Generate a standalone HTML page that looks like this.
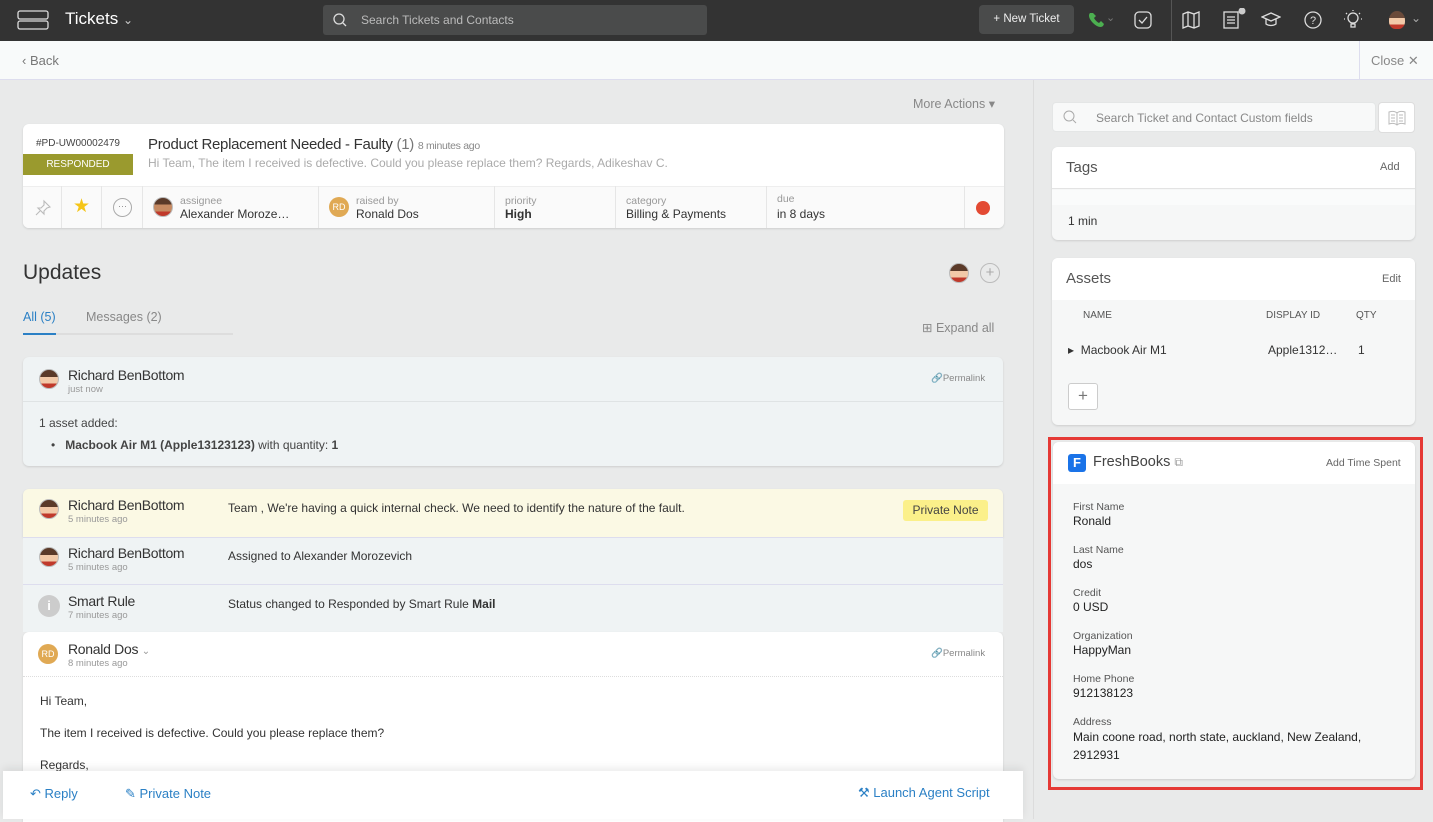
<!DOCTYPE html>
<html><head><meta charset="utf-8"><style>
*{box-sizing:border-box;margin:0;padding:0}
body{width:1433px;height:819px;overflow:hidden;background:#e9eaea;font-family:"Liberation Sans",sans-serif;color:#333;position:relative;font-size:12px}
.a{position:absolute}
.top{left:0;top:0;width:1433px;height:41px;background:#333}
.sub{left:0;top:41px;width:1433px;height:39px;background:#f8fafa;border-bottom:1px solid #dde}
.card{background:#fff;border-radius:6px;box-shadow:0 1px 2px rgba(0,0,0,.12)}
.ic{stroke:#ddd;fill:none;stroke-width:1.3}
.lbl{font-size:10.5px;color:#999}
.val{font-size:12px;color:#333}
.av{width:20px;height:20px;border-radius:50%;background:#ddd;border:1px solid #bbb}
.rd{width:20px;height:20px;border-radius:50%;background:#e0a954;color:#fff;font-size:9px;text-align:center;line-height:20px}
.nm{font-size:14px;color:#333;letter-spacing:-.3px}
.tm{font-size:9.5px;color:#999}
.blue{color:#2b80c5}
</style></head><body>
<div class="a top">
 <svg class="a" style="left:17px;top:10px" width="32" height="20"><rect x="1" y="1" width="30" height="8" rx="2" class="ic"/><rect x="1" y="11" width="30" height="8" rx="2" class="ic"/></svg>
 <div class="a" style="left:65px;top:9px;color:#fff;font-size:17px">Tickets <span style="font-size:12px;color:#ccc">&#8964;</span></div>
 <div class="a" style="left:323px;top:5px;width:384px;height:30px;background:#4a4b4b;border-radius:3px"><svg class="a" style="left:10px;top:8px" width="14" height="14"><circle cx="6" cy="6" r="5" class="ic"/><path d="M10 10l3 3" class="ic"/></svg><span class="a" style="left:38px;top:8px;color:#bbb;font-size:12px">Search Tickets and Contacts</span></div>
 <div class="a" style="left:979px;top:5px;width:95px;height:29px;background:#4a4b4b;border-radius:4px;color:#eee;font-size:11.5px;line-height:29px;text-align:center">+ New Ticket</div>
 <svg class="a" style="left:1087px;top:11px" width="20" height="18"><path d="M3 2c-2 2-1 6 3 10s8 5 10 3l1-2-3-3-2 2c-2-1-4-3-5-5l2-2-3-3z" fill="#4caf50"/></svg>
 <div class="a" style="left:1106px;top:11px;color:#777;font-size:11px">&#8964;</div>
 <svg class="a" style="left:1134px;top:11px" width="18" height="18"><rect x="1" y="1" width="16" height="16" rx="4" class="ic"/><path d="M5 9l3 3 5-6" class="ic"/></svg>
 <div class="a" style="left:1171px;top:0;width:1px;height:41px;background:#555"></div>
 <svg class="a" style="left:1182px;top:11px" width="18" height="18"><path d="M1 3l5-2 6 2 5-2v14l-5 2-6-2-5 2z M6 1v14 M12 3v14" class="ic"/></svg>
 <svg class="a" style="left:1221px;top:8px" width="26" height="22"><rect x="3" y="4" width="14" height="16" class="ic"/><path d="M6 9h8M6 12h8M6 15h8" class="ic"/><circle cx="21" cy="3" r="3.5" fill="#ccc"/></svg>
 <svg class="a" style="left:1261px;top:11px" width="20" height="16"><path d="M1 6l9-4 9 4-9 4z M5 8v5c3 2 7 2 10 0V8" class="ic"/></svg>
 <svg class="a" style="left:1304px;top:11px" width="18" height="18"><circle cx="9" cy="9" r="8" class="ic"/><text x="9" y="13" font-size="11" fill="#ddd" text-anchor="middle">?</text></svg>
 <svg class="a" style="left:1343px;top:9px" width="20" height="20"><circle cx="10" cy="9" r="5" class="ic"/><path d="M8 15h4v3h-4zM10 1v1M3 4l1 1M17 4l-1 1M1 10h1M18 10h1" class="ic"/></svg>
 <div class="a" style="left:1389px;top:11px;width:16px;height:18px;border-radius:50% 50% 40% 40%;background:linear-gradient(#6a4a3a 40%,#f2c9a8 40%,#f2c9a8 75%,#c0392b 75%)"></div>
 <div class="a" style="left:1411px;top:11px;color:#aaa;font-size:12px">&#8964;</div>
</div>
<div class="a sub">
 <div class="a" style="left:22px;top:12px;color:#777;font-size:13px">&lsaquo; Back</div>
 <div class="a" style="left:1359px;top:0;width:1px;height:39px;background:#dde"></div>
 <div class="a" style="left:1371px;top:12px;color:#888;font-size:13px">Close &#10005;</div>
</div>
<div class="a" style="left:1033px;top:80px;width:1px;height:739px;background:#dcdcdc"></div>
<div class="a" style="left:913px;top:96px;color:#888;font-size:12.5px">More Actions &#9662;</div>
<div class="a card" style="left:23px;top:124px;width:981px;height:104px">
 <div class="a" style="left:13px;top:14px;font-size:10px;color:#444">#PD-UW00002479</div>
 <div class="a" style="left:0;top:30px;width:110px;height:21px;background:#9a9a2e;color:#fff;font-size:10px;text-align:center;line-height:21px">RESPONDED</div>
 <div class="a" style="left:125px;top:12px;font-size:15px;color:#333;letter-spacing:-.3px">Product Replacement Needed - Faulty <span style="color:#777">(1)</span> <span style="font-size:10.5px;color:#888">8 minutes ago</span></div>
 <div class="a" style="left:125px;top:32px;font-size:12px;color:#aaa">Hi Team, The item I received is defective. Could you please replace them? Regards, Adikeshav C.</div>
 <div class="a" style="left:0;top:62px;width:981px;height:42px;background:#fafafa;border-top:1px solid #eee;border-radius:0 0 6px 6px"></div>
 <svg class="a" style="left:11px;top:75px" width="18" height="18"><path d="M10 2l6 6-3 1-3 3 0 3-6-6 3 0 3-3zM6 12l-4 4" stroke="#bbb" fill="none" stroke-width="1.1"/></svg>
 <div class="a" style="left:50px;top:71px;color:#f5c518;font-size:19px">&#9733;</div>
 <div class="a" style="left:90px;top:74px;width:19px;height:19px;border-radius:50%;border:1px solid #aaa;font-size:9px;color:#888;text-align:center;line-height:15px">···</div>
 <div class="a" style="left:119px;top:62px;width:1px;height:42px;background:#e6e6e6"></div>
 <div class="a" style="left:38px;top:62px;width:1px;height:42px;background:#e6e6e6"></div>
 <div class="a" style="left:78px;top:62px;width:1px;height:42px;background:#e6e6e6"></div>
 <div class="a av" style="left:130px;top:73px;background:linear-gradient(#5b3a29 35%,#c68a62 35%,#c68a62 75%,#c0392b 75%)"></div>
 <div class="a lbl" style="left:157px;top:71px">assignee</div><div class="a val" style="left:157px;top:83px">Alexander Moroze…</div>
 <div class="a" style="left:295px;top:62px;width:1px;height:42px;background:#e6e6e6"></div>
 <div class="a rd" style="left:306px;top:73px">RD</div>
 <div class="a lbl" style="left:333px;top:71px">raised by</div><div class="a val" style="left:333px;top:83px">Ronald Dos</div>
 <div class="a" style="left:471px;top:62px;width:1px;height:42px;background:#e6e6e6"></div>
 <div class="a lbl" style="left:482px;top:71px">priority</div><div class="a val" style="left:482px;top:83px;font-weight:bold">High</div>
 <div class="a" style="left:592px;top:62px;width:1px;height:42px;background:#e6e6e6"></div>
 <div class="a lbl" style="left:603px;top:71px">category</div><div class="a val" style="left:603px;top:83px">Billing &amp; Payments</div>
 <div class="a" style="left:743px;top:62px;width:1px;height:42px;background:#e6e6e6"></div>
 <div class="a lbl" style="left:754px;top:69px">due</div><div class="a val" style="left:754px;top:83px">in 8 days</div>
 <div class="a" style="left:941px;top:62px;width:1px;height:42px;background:#e6e6e6"></div>
 <div class="a" style="left:953px;top:77px;width:14px;height:14px;border-radius:50%;background:#e34a33"></div>
</div>
<div class="a" style="left:23px;top:261px;font-size:21px;color:#333">Updates</div>
<div class="a av" style="left:949px;top:263px;background:linear-gradient(#5b3a29 40%,#f2c9a8 40%,#f2c9a8 75%,#c0392b 75%)"></div>
<div class="a" style="left:980px;top:263px;width:20px;height:20px;border-radius:50%;border:1px solid #bbb;color:#aaa;text-align:center;line-height:18px;font-size:15px">+</div>
<div class="a blue" style="left:23px;top:310px;font-size:12.5px">All (5)</div>
<div class="a" style="left:86px;top:310px;font-size:12.5px;color:#888">Messages (2)</div>
<div class="a" style="left:23px;top:333px;width:210px;height:2px;background:#ddd"></div>
<div class="a" style="left:23px;top:333px;width:33px;height:2px;background:#2b80c5"></div>
<div class="a" style="left:922px;top:320px;font-size:12.5px;color:#888">&#8862; Expand all</div>
<div class="a card" style="left:23px;top:357px;width:980px;height:109px;background:#eff3f4">
 <div class="a av" style="left:16px;top:12px;background:linear-gradient(#5b3a29 40%,#f2c9a8 40%,#f2c9a8 75%,#c0392b 75%)"></div>
 <div class="a nm" style="left:45px;top:10px">Richard BenBottom</div>
 <div class="a tm" style="left:45px;top:27px">just now</div>
 <div class="a" style="left:908px;top:16px;font-size:9.5px;color:#888">&#128279;Permalink</div>
 <div class="a" style="left:0;top:44px;width:980px;height:1px;background:#dfe3e4"></div>
 <div class="a" style="left:16px;top:59px;font-size:12px;color:#444">1 asset added:</div>
 <div class="a" style="left:28px;top:81px;font-size:12px;color:#444">•&nbsp;&nbsp; <b>Macbook Air M1 (Apple13123123)</b> with quantity: <b>1</b></div>
</div>
<div class="a card" style="left:23px;top:489px;width:980px;height:48px;background:#fbf9e4;border-radius:6px 6px 0 0"></div>
<div class="a av" style="left:39px;top:499px;background:linear-gradient(#5b3a29 40%,#f2c9a8 40%,#f2c9a8 75%,#c0392b 75%)"></div>
<div class="a nm" style="left:68px;top:497px">Richard BenBottom</div><div class="a tm" style="left:68px;top:514px">5 minutes ago</div>
<div class="a" style="left:228px;top:501px;font-size:12px;color:#333">Team , We're having a quick internal check. We need to identify the nature of the fault.</div>
<div class="a" style="left:903px;top:500px;width:85px;height:21px;background:#fbf08a;border-radius:3px;font-size:12px;text-align:center;line-height:21px;color:#444">Private Note</div>
<div class="a" style="left:23px;top:537px;width:980px;height:47px;background:#eff3f4;border-top:1px solid #dde"></div>
<div class="a av" style="left:39px;top:547px;background:linear-gradient(#5b3a29 40%,#f2c9a8 40%,#f2c9a8 75%,#c0392b 75%)"></div>
<div class="a nm" style="left:68px;top:545px">Richard BenBottom</div><div class="a tm" style="left:68px;top:562px">5 minutes ago</div>
<div class="a" style="left:228px;top:549px;font-size:12px">Assigned to Alexander Morozevich</div>
<div class="a" style="left:23px;top:584px;width:980px;height:48px;background:#eff3f4;border-top:1px solid #dde"></div>
<div class="a" style="left:38px;top:595px;width:22px;height:22px;border-radius:50%;background:#ccc;color:#fff;font-weight:bold;text-align:center;line-height:22px;font-size:13px">i</div>
<div class="a nm" style="left:68px;top:593px">Smart Rule</div><div class="a tm" style="left:68px;top:610px">7 minutes ago</div>
<div class="a" style="left:228px;top:597px;font-size:12px">Status changed to Responded by Smart Rule <b>Mail</b></div>
<div class="a" style="left:23px;top:632px;width:980px;height:190px;background:#fff;border-radius:6px 6px 0 0;box-shadow:0 1px 2px rgba(0,0,0,.12)">
 <div class="a rd" style="left:15px;top:12px">RD</div>
 <div class="a nm" style="left:45px;top:9px">Ronald Dos <span style="font-size:10px;color:#999">&#8964;</span></div><div class="a tm" style="left:45px;top:26px">8 minutes ago</div>
 <div class="a" style="left:908px;top:16px;font-size:9.5px;color:#888">&#128279;Permalink</div>
 <div class="a" style="left:0;top:44px;width:980px;border-top:1px dotted #ddd"></div>
 <div class="a" style="left:17px;top:62px;font-size:12px">Hi Team,</div>
 <div class="a" style="left:17px;top:94px;font-size:12px">The item I received is defective. Could you please replace them?</div>
 <div class="a" style="left:17px;top:126px;font-size:12px">Regards,</div>
</div>
<div class="a" style="left:3px;top:771px;width:1020px;height:48px;background:#fff;box-shadow:0 -3px 8px rgba(0,0,0,.08)">
 <div class="a blue" style="left:27px;top:15px;font-size:13px">&#8630; Reply</div>
 <div class="a blue" style="left:122px;top:15px;font-size:13px">&#9998; Private Note</div>
 <div class="a blue" style="left:855px;top:14px;font-size:13px">&#9874; Launch Agent Script</div>
</div>
<div class="a" style="left:1052px;top:102px;width:324px;height:30px;background:#f8f9f9;border-radius:4px;border:1px solid #e4e6e6"><svg class="a" style="left:10px;top:7px" width="14" height="14"><circle cx="6" cy="6" r="5" stroke="#aaa" fill="none"/><path d="M10 10l3 3" stroke="#aaa"/></svg><span class="a" style="left:43px;top:8px;color:#888;font-size:12px">Search Ticket and Contact Custom fields</span></div>
<div class="a" style="left:1378px;top:102px;width:37px;height:31px;background:#fff;border-radius:4px;border:1px solid #ddd"><svg class="a" style="left:9px;top:7px" width="18" height="16"><path d="M1 2c3-1 6-1 8 1 2-2 5-2 8-1v12c-3-1-6-1-8 1-2-2-5-2-8-1zM9 3v12M3 5h4M3 8h4M3 11h4M11 5h4M11 8h4M11 11h4" stroke="#bbb" fill="none"/></svg></div>
<div class="a card" style="left:1052px;top:147px;width:363px;height:93px;background:#f6f7f7">
 <div class="a" style="left:0;top:0;width:363px;height:42px;background:#fff;border-bottom:1px solid #e3e3e3;border-radius:6px 6px 0 0"></div>
 <div class="a" style="left:0;top:43px;width:363px;height:15px;background:#fafbfb"></div>
 <div class="a" style="left:14px;top:12px;font-size:15px;color:#555">Tags</div>
 <div class="a" style="left:328px;top:14px;font-size:11px;color:#666">Add</div>
 <div class="a" style="left:16px;top:67px;font-size:12px">1 min</div>
</div>
<div class="a card" style="left:1052px;top:258px;width:363px;height:167px;background:#f6f7f7">
 <div class="a" style="left:0;top:0;width:363px;height:42px;background:#fff;border-radius:6px 6px 0 0"></div>
 <div class="a" style="left:14px;top:12px;font-size:15px;color:#555">Assets</div>
 <div class="a" style="left:330px;top:15px;font-size:11px;color:#666">Edit</div>
 <div class="a" style="left:31px;top:52px;font-size:10px;color:#555">NAME</div>
 <div class="a" style="left:214px;top:52px;font-size:10px;color:#555">DISPLAY ID</div>
 <div class="a" style="left:304px;top:52px;font-size:10px;color:#555">QTY</div>
 <div class="a" style="left:16px;top:85px;font-size:12px">&#9656;&nbsp; Macbook Air M1</div>
 <div class="a" style="left:216px;top:85px;font-size:12px">Apple1312…</div>
 <div class="a" style="left:306px;top:85px;font-size:12px">1</div>
 <div class="a" style="left:16px;top:125px;width:30px;height:27px;background:#fff;border:1px solid #ccc;border-radius:3px;text-align:center;line-height:24px;color:#777;font-size:17px">+</div>
</div>
<div class="a" style="left:1048px;top:437px;width:375px;height:353px;border:3px solid #e53935"></div>
<div class="a card" style="left:1053px;top:442px;width:362px;height:337px;background:#f6f7f7">
 <div class="a" style="left:0;top:0;width:362px;height:42px;background:#fff;border-radius:6px 6px 0 0"></div>
 <div class="a" style="left:15px;top:12px;width:18px;height:18px;background:#1a73e8;border-radius:3px;color:#fff;font-weight:bold;text-align:center;line-height:18px;font-size:13px">F</div>
 <div class="a" style="left:40px;top:12px;font-size:14.5px;color:#444">FreshBooks <span style="color:#999;font-size:12px">&#10697;</span></div>
 <div class="a" style="left:273px;top:15px;font-size:10.5px;color:#666">Add Time Spent</div>
 <div class="a" style="left:20px;top:58px;font-size:10.5px;color:#555;line-height:14px">First Name<br><span style="font-size:12px;color:#222">Ronald</span></div>
 <div class="a" style="left:20px;top:101px;font-size:10.5px;color:#555;line-height:14px">Last Name<br><span style="font-size:12px;color:#222">dos</span></div>
 <div class="a" style="left:20px;top:144px;font-size:10.5px;color:#555;line-height:14px">Credit<br><span style="font-size:12px;color:#222">0 USD</span></div>
 <div class="a" style="left:20px;top:187px;font-size:10.5px;color:#555;line-height:14px">Organization<br><span style="font-size:12px;color:#222">HappyMan</span></div>
 <div class="a" style="left:20px;top:230px;font-size:10.5px;color:#555;line-height:14px">Home Phone<br><span style="font-size:12px;color:#222">912138123</span></div>
 <div class="a" style="left:20px;top:273px;font-size:10.5px;color:#555;line-height:14px">Address</div>
 <div class="a" style="left:20px;top:286px;width:320px;font-size:12px;color:#222;line-height:18px">Main coone road, north state, auckland, New Zealand, 2912931</div>
</div>
</body></html>
